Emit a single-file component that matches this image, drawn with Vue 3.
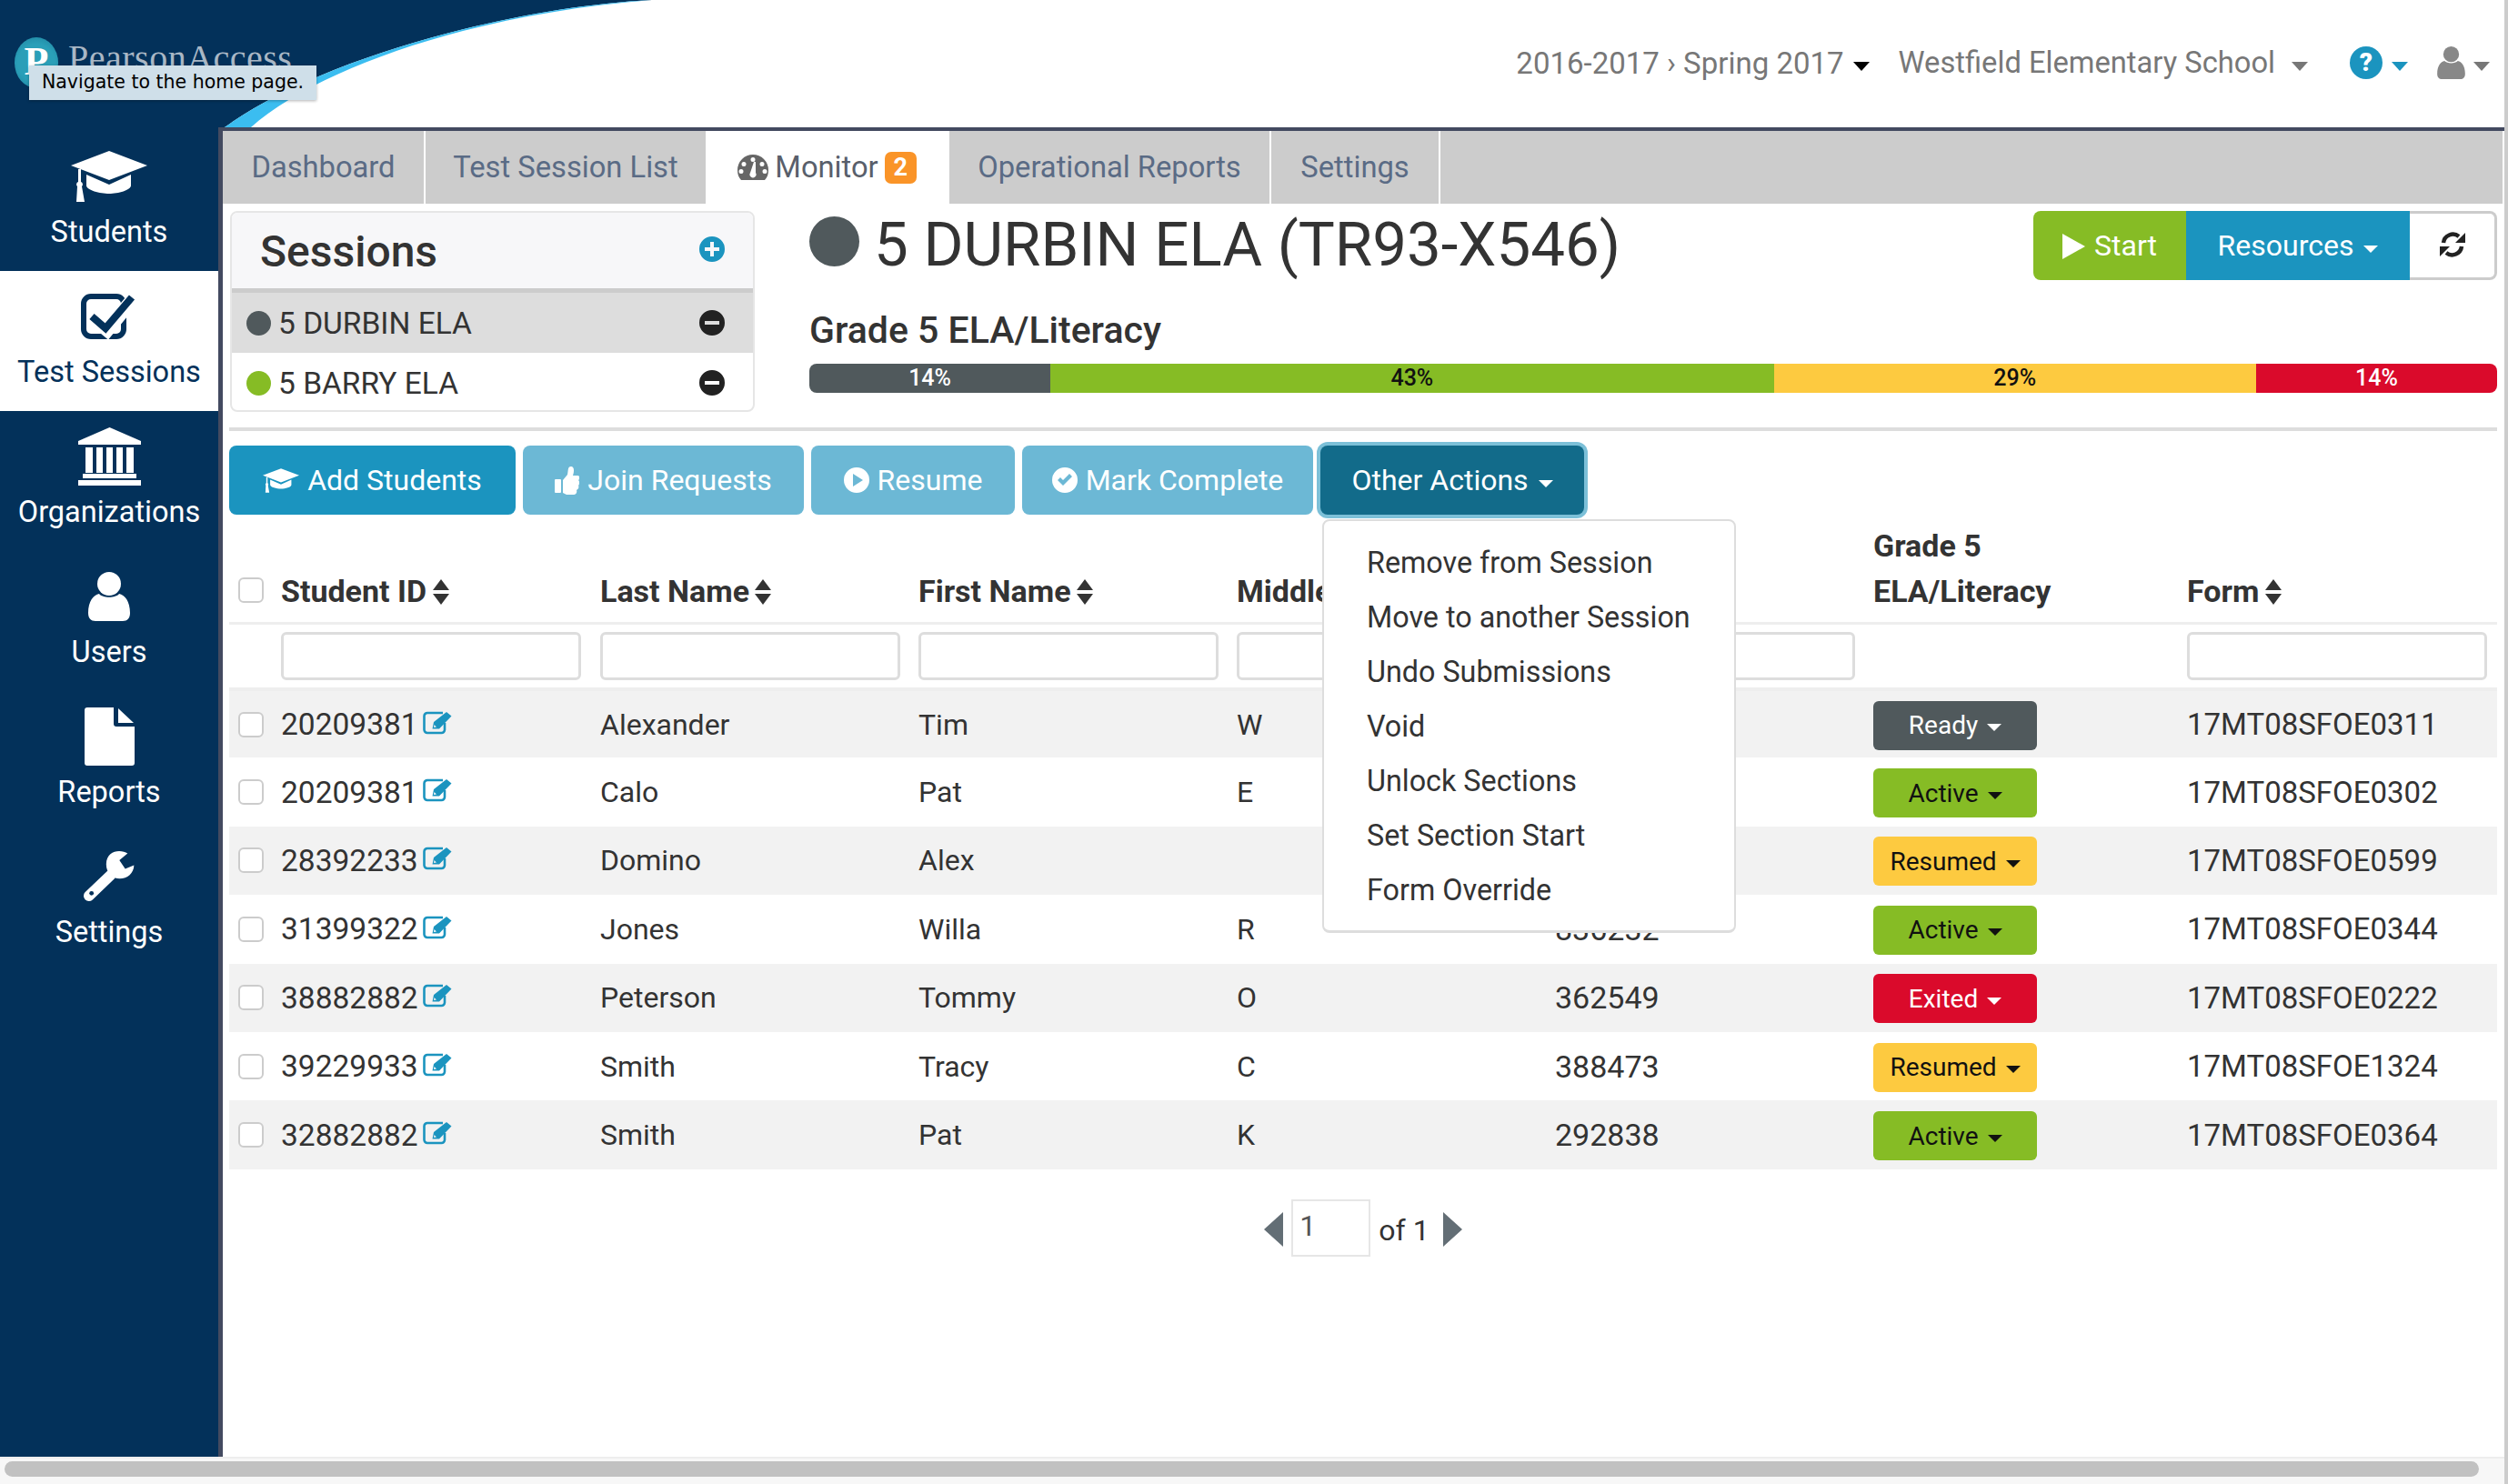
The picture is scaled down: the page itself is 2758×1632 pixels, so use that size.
<script setup>
import { ref } from 'vue'

const navItems = [
  { label: 'Students', icon: 'cap', w: 84, h: 56 },
  { label: 'Test Sessions', icon: 'check', w: 62, h: 50, active: true },
  { label: 'Organizations', icon: 'bank', w: 69, h: 64 },
  { label: 'Users', icon: 'user', w: 46, h: 54 },
  { label: 'Reports', icon: 'file', w: 55, h: 64 },
  { label: 'Settings', icon: 'wrench', w: 58, h: 60 },
]

const tabs = [
  { label: 'Dashboard', width: 223 },
  { label: 'Test Session List', width: 310 },
  { label: 'Monitor', width: 266, active: true, badge: 2 },
  { label: 'Operational Reports', width: 354 },
  { label: 'Settings', width: 186 },
]

const sessions = [
  { name: '5 DURBIN ELA', color: '#50595c', selected: true },
  { name: '5 BARRY ELA', color: '#86bc25' },
]

const progress = [
  { label: '14%', share: 100 / 7, color: '#50595c', text: '#fff' },
  { label: '43%', share: 300 / 7, color: '#86bc25', text: '#111' },
  { label: '29%', share: 200 / 7, color: '#fdca40', text: '#111' },
  { label: '14%', share: 100 / 7, color: '#da0a2b', text: '#fff' },
]

const actions = [
  { label: 'Add Students', icon: 'cap', w: 40, h: 27, primary: true, width: 315 },
  { label: 'Join Requests', icon: 'thumb', w: 27, h: 31, width: 309 },
  { label: 'Resume', icon: 'play', w: 28, h: 28, width: 224 },
  { label: 'Mark Complete', icon: 'ok', w: 28, h: 28, width: 320 },
]

const menuItems = [
  'Remove from Session',
  'Move to another Session',
  'Undo Submissions',
  'Void',
  'Unlock Sections',
  'Set Section Start',
  'Form Override',
]

const students = [
  { id: '20209381', last: 'Alexander', first: 'Tim', middle: 'W', code: '', status: 'Ready', form: '17MT08SFOE0311' },
  { id: '20209381', last: 'Calo', first: 'Pat', middle: 'E', code: '', status: 'Active', form: '17MT08SFOE0302' },
  { id: '28392233', last: 'Domino', first: 'Alex', middle: '', code: '', status: 'Resumed', form: '17MT08SFOE0599' },
  { id: '31399322', last: 'Jones', first: 'Willa', middle: 'R', code: '836232', status: 'Active', form: '17MT08SFOE0344' },
  { id: '38882882', last: 'Peterson', first: 'Tommy', middle: 'O', code: '362549', status: 'Exited', form: '17MT08SFOE0222' },
  { id: '39229933', last: 'Smith', first: 'Tracy', middle: 'C', code: '388473', status: 'Resumed', form: '17MT08SFOE1324' },
  { id: '32882882', last: 'Smith', first: 'Pat', middle: 'K', code: '292838', status: 'Active', form: '17MT08SFOE0364' },
]

const page = ref(1)
</script>

<template>
  <div class="page">
    <!-- icon sprite -->
    <svg class="sprite" aria-hidden="true">
      <symbol id="i-cap" viewBox="0 0 84 56">
        <path d="M42 0 84 16 42 32 0 16Z" />
        <path d="M17 26 42 37 66 26V38C66 43 52 47 42 47S17 43 17 38Z" />
        <path d="M8 20h3v14a3 3 0 0 1 1 5l3 17H6l1-17a3 3 0 0 1 1-5Z" />
      </symbol>
      <symbol id="i-check" viewBox="0 0 62 50">
        <rect x="3" y="3" width="44" height="44" rx="8" fill="none" stroke="currentColor" stroke-width="6" />
        <path d="M11 25 29 40 57 6" fill="none" stroke="#fff" stroke-width="15" />
        <path d="M12 25 27 38 56 4" fill="none" stroke="currentColor" stroke-width="8" />
      </symbol>
      <symbol id="i-bank" viewBox="0 0 69 64">
        <path d="M34.5 0 69 15V19H0V15Z" />
        <rect x="8" y="22" width="8" height="28" />
        <rect x="20" y="22" width="7" height="28" />
        <rect x="31" y="22" width="7" height="28" />
        <rect x="42" y="22" width="7" height="28" />
        <rect x="53" y="22" width="8" height="28" />
        <rect x="5" y="51" width="59" height="5" />
        <rect y="58" width="69" height="6" />
      </symbol>
      <symbol id="i-user" viewBox="0 0 46 54">
        <circle cx="23" cy="13" r="13" />
        <path d="M0 45C0 32 6 25 12 24 16 29 30 29 34 24 40 25 46 32 46 45 46 51 43 54 38 54H8C3 54 0 51 0 45Z" />
      </symbol>
      <symbol id="i-file" viewBox="0 0 55 64">
        <path d="M3 0H32V18A3 3 0 0 0 35 21H55V61A3 3 0 0 1 52 64H3A3 3 0 0 1 0 61V3A3 3 0 0 1 3 0Z" />
        <path d="M37 1 54 17H37Z" />
      </symbol>
      <symbol id="i-wrench" viewBox="0 0 60 60">
        <path d="M7 52 32 28" fill="none" stroke="currentColor" stroke-width="12" stroke-linecap="round" />
        <path d="M51 3.500C44-1 27-1 26.700 16 26.700 26 34 32.300 42 32.300 51 32.300 58 26 58.300 17L48.300 21.300 41.700 11.300Z" />
        <circle cx="10" cy="49" r="2.500" fill="#03315a" />
      </symbol>
      <symbol id="i-thumb" viewBox="0 0 27 31">
        <rect y="14" width="7" height="15" rx="1" />
        <path d="M9 15 14 9C15 5 14 0 18 0 21 0 22 4 20 10H25C28 10 28 14 26 15 28 17 27 20 26 21 27 23 26 25 24 26 25 29 23 31 21 31H13L9 29Z" />
      </symbol>
      <symbol id="i-play" viewBox="0 0 28 28">
        <path fill-rule="evenodd" d="M14 0a14 14 0 1 0 0 28a14 14 0 1 0 0-28ZM10 7 21 14 10 21Z" />
      </symbol>
      <symbol id="i-ok" viewBox="0 0 28 28">
        <path fill-rule="evenodd" d="M14 0a14 14 0 1 0 0 28a14 14 0 1 0 0-28ZM6 14 9 11 12 14 19 7 22 10 12 20Z" />
      </symbol>
      <symbol id="i-plus" viewBox="0 0 28 28">
        <path fill-rule="evenodd" d="M14 0a14 14 0 1 0 0 28a14 14 0 1 0 0-28ZM12 6H16V12H22V16H16V22H12V16H6V12H12Z" />
      </symbol>
      <symbol id="i-minus" viewBox="0 0 28 28">
        <path fill-rule="evenodd" d="M14 0a14 14 0 1 0 0 28a14 14 0 1 0 0-28ZM6 12H22V16H6Z" />
      </symbol>
      <symbol id="i-gauge" viewBox="0 0 34 28">
        <path fill-rule="evenodd" d="M17 0A17 17 0 0 1 34 17C34 21 33 25 30 28H4C1 25 0 21 0 17A17 17 0 0 1 17 0ZM17 3a2.500 2.500 0 1 0 0 5a2.500 2.500 0 1 0 0-5ZM7 8a2.500 2.500 0 1 0 0 5a2.500 2.500 0 1 0 0-5ZM27 8a2.500 2.500 0 1 0 0 5a2.500 2.500 0 1 0 0-5ZM4 16a2.500 2.500 0 1 0 0 5a2.500 2.500 0 1 0 0-5ZM30 16a2.500 2.500 0 1 0 0 5a2.500 2.500 0 1 0 0-5ZM18 8 14 20a3.500 3.500 0 1 0 6 0L20 8Z" />
      </symbol>
      <symbol id="i-refresh" viewBox="0 0 28 28">
        <path d="M4 12A10.500 10.500 0 0 1 21 5" fill="none" stroke="currentColor" stroke-width="4.500" />
        <path d="M28 1V12H17Z" />
        <path d="M24 16A10.500 10.500 0 0 1 7 23" fill="none" stroke="currentColor" stroke-width="4.500" />
        <path d="M0 27V16H11Z" />
      </symbol>
      <symbol id="i-edit" viewBox="0 0 32 26">
        <path d="M24 13V20.500A3.500 3.500 0 0 1 20.500 24H5A3.500 3.500 0 0 1 1.500 20.500V5.500A3.500 3.500 0 0 1 5 2H22" fill="none" stroke="currentColor" stroke-width="2.600" />
        <path fill-rule="evenodd" d="M10.500 19.500 12 12 26 1 31.500 5.500 18 19.500ZM12.500 15 12 18 15 17.500Z" />
      </symbol>
      <symbol id="i-sort" viewBox="0 0 18 28">
        <path d="M9 0 18 12H0Z" />
        <path d="M0 16H18L9 28Z" />
      </symbol>
    </svg>

    <header class="top">
      <svg class="swoosh" viewBox="0 0 2758 144" preserveAspectRatio="none">
        <path d="M0 0H717C560 8 350 65 247 140V144H0Z" fill="#03315a" />
        <path d="M717 0C560 8 350 65 247 140H276C350 75 520 15 717 0Z" fill="#3bbdf0" />
        <rect x="240" y="140" width="2518" height="4" fill="#434a60" />
      </svg>

      <div class="logo">
        <span class="logo-mark">P</span>
        <span class="logo-text">PearsonAccess</span>
      </div>
      <div class="tooltip">Navigate to the home page.</div>

      <div class="tools">
        <span class="term">2016-2017 › Spring 2017</span>
        <i class="caret caret-top dark"></i>
        <span class="school">Westfield Elementary School</span>
        <i class="caret caret-top"></i>
        <span class="help">?</span>
        <i class="caret caret-top teal"></i>
        <svg class="account" width="31" height="36"><use href="#i-user" /></svg>
        <i class="caret caret-top"></i>
      </div>
    </header>

    <nav class="side">
      <a v-for="item in navItems" :key="item.label" class="side-item" :class="{ current: item.active }">
        <span class="side-icon">
          <svg :width="item.w" :height="item.h"><use :href="`#i-${item.icon}`" /></svg>
        </span>
        <span class="side-label">{{ item.label }}</span>
      </a>
    </nav>

    <main class="main">
      <div class="tabs">
        <a v-for="tab in tabs" :key="tab.label" class="tab" :class="{ current: tab.active }" :style="{ width: tab.width + 'px' }">
          <svg v-if="tab.active" width="34" height="28"><use href="#i-gauge" /></svg>
          {{ tab.label }}
          <span v-if="tab.badge" class="badge">{{ tab.badge }}</span>
        </a>
      </div>

      <div class="content">
        <div class="overview">
          <section class="sessions">
            <div class="sessions-head">
              <h2>Sessions</h2>
              <svg class="teal-icon" width="28" height="28"><use href="#i-plus" /></svg>
            </div>
            <div v-for="s in sessions" :key="s.name" class="session" :class="{ selected: s.selected }">
              <i class="dot" :style="{ background: s.color }"></i>
              <span class="session-name">{{ s.name }}</span>
              <svg width="28" height="28"><use href="#i-minus" /></svg>
            </div>
          </section>

          <section class="detail">
            <div class="detail-head">
              <i class="title-dot"></i>
              <h1>5 DURBIN ELA (TR93-X546)</h1>
              <div class="head-buttons">
                <button class="head-btn start"><i class="play"></i>Start</button>
                <button class="head-btn resources">Resources <i class="caret caret-btn"></i></button>
                <button class="head-btn refresh"><svg width="28" height="28"><use href="#i-refresh" /></svg></button>
              </div>
            </div>
            <h3>Grade 5 ELA/Literacy</h3>
            <div class="progress">
              <div
                v-for="(p, i) in progress"
                :key="i"
                class="progress-part"
                :style="{ width: p.share + '%', background: p.color, color: p.text }"
              >{{ p.label }}</div>
            </div>
          </section>
        </div>

        <div class="divider"></div>

        <div class="actions">
          <button
            v-for="a in actions"
            :key="a.label"
            class="action"
            :class="{ primary: a.primary }"
            :style="{ width: a.width + 'px' }"
          >
            <svg :width="a.w" :height="a.h"><use :href="`#i-${a.icon}`" /></svg>
            {{ a.label }}
          </button>
          <button class="action other">Other Actions <i class="caret caret-btn"></i></button>

          <ul class="menu">
            <li v-for="m in menuItems" :key="m">{{ m }}</li>
          </ul>
        </div>

        <table class="grid">
          <colgroup>
            <col style="width: 57px" />
            <col style="width: 351px" />
            <col style="width: 350px" />
            <col style="width: 350px" />
            <col style="width: 350px" />
            <col style="width: 350px" />
            <col style="width: 345px" />
            <col style="width: 341px" />
          </colgroup>
          <thead>
            <tr class="head-row">
              <th><input type="checkbox" class="box" /></th>
              <th>Student ID <svg class="sort" width="18" height="28"><use href="#i-sort" /></svg></th>
              <th>Last Name <svg class="sort" width="18" height="28"><use href="#i-sort" /></svg></th>
              <th>First Name <svg class="sort" width="18" height="28"><use href="#i-sort" /></svg></th>
              <th>Middle Name</th>
              <th></th>
              <th>Grade 5<br />ELA/Literacy</th>
              <th>Form <svg class="sort" width="18" height="28"><use href="#i-sort" /></svg></th>
            </tr>
            <tr class="filter-row">
              <td></td>
              <td><input class="filter" /></td>
              <td><input class="filter" /></td>
              <td><input class="filter" /></td>
              <td><input class="filter" /></td>
              <td><input class="filter" /></td>
              <td></td>
              <td><input class="filter" /></td>
            </tr>
          </thead>
          <tbody>
            <tr v-for="(st, i) in students" :key="i">
              <td><input type="checkbox" class="box" /></td>
              <td>
                <span class="id">{{ st.id }}<svg class="edit" width="32" height="26"><use href="#i-edit" /></svg></span>
              </td>
              <td>{{ st.last }}</td>
              <td>{{ st.first }}</td>
              <td>{{ st.middle }}</td>
              <td class="code">{{ st.code }}</td>
              <td>
                <button class="status" :class="st.status.toLowerCase()">{{ st.status }} <i class="caret caret-btn"></i></button>
              </td>
              <td class="form">{{ st.form }}</td>
            </tr>
          </tbody>
        </table>

        <div class="pager">
          <i class="arrow left"></i>
          <input v-model="page" class="pager-input" />
          <span>of 1</span>
          <i class="arrow right"></i>
        </div>
      </div>
    </main>

    <div class="hscroll"><div class="thumb"></div></div>
  </div>
</template>

<style scoped>
* {
  box-sizing: border-box;
}

.page {
  width: 2758px;
  height: 1632px;
  position: relative;
  overflow: hidden;
  display: grid;
  grid-template-columns: 240px 1fr;
  grid-template-rows: 144px 1fr 30px;
  background: #fff;
  color: #333;
  font-family: Roboto, "Liberation Sans", sans-serif;
  font-size: 32px;
  border-right: 4px solid #ccc;
}

.sprite {
  position: absolute;
  width: 0;
  height: 0;
}

/* header */
.top {
  grid-column: 1 / 3;
  position: relative;
  display: flex;
  justify-content: flex-end;
}

.swoosh {
  position: absolute;
  left: 0;
  top: 0;
  width: 2758px;
  height: 144px;
}

.logo {
  position: absolute;
  left: 16px;
  top: 41px;
  display: flex;
  align-items: flex-start;
  gap: 11px;
}

.logo-mark {
  width: 48px;
  height: 56px;
  border-radius: 50%;
  background: radial-gradient(circle, #2a9fb8 55%, #1c7f9c 100%);
  color: #fff;
  text-align: center;
  font: 700 44px/54px "Liberation Serif", serif;
}

.logo-text {
  color: #a9b7c5;
  font: 40px/46px "Liberation Serif", serif;
  letter-spacing: 0.5px;
}

.tooltip {
  position: absolute;
  left: 32px;
  top: 72px;
  width: 316px;
  height: 38px;
  background: #cfdfe9;
  color: #000;
  font: 20.500px/37px "DejaVu Sans", sans-serif;
  text-align: center;
  box-shadow: 0 1px 3px rgba(0, 0, 0, 0.3);
}

.tools {
  position: relative;
  height: 140px;
  display: flex;
  align-items: center;
  padding-right: 16px;
  color: #777;
  padding-bottom: 2px;
}

.term {
  font-size: 33px;
}

.school {
  font-size: 32.700px;
  margin-left: 32px;
  margin-right: 18px;
}

.help {
  margin-left: 46px;
  margin-right: 10px;
  width: 36px;
  height: 36px;
  border-radius: 50%;
  background: #1b94bf;
  color: #fff;
  font-size: 28px;
  font-weight: 900;
  line-height: 36px;
  text-align: center;
}

.account {
  margin-left: 32px;
  margin-right: 9px;
  fill: #888;
}

.caret {
  display: inline-block;
  width: 0;
  height: 0;
  border-left: 9px solid transparent;
  border-right: 9px solid transparent;
  border-top: 10px solid #777;
}

.caret-top {
  margin-top: 8px;
}

.caret-top.dark {
  margin-left: 10px;
  border-top-color: #000;
}

.caret-top.teal {
  border-top-color: #1b94bf;
}

.caret-btn {
  border-left-width: 8px;
  border-right-width: 8px;
  border-top: 8px solid currentColor;
  vertical-align: 3px;
  margin-left: 3px;
}

/* sidebar */
.side {
  background: #03315a;
  color: #fff;
}

.side-item {
  height: 154px;
  display: flex;
  flex-direction: column;
  align-items: center;
}

.side-item.current {
  background: #fff;
  color: #03315a;
}

.side-icon {
  height: 84px;
  margin-top: 8px;
  margin-bottom: -1px;
  display: flex;
  align-items: center;
}

.side-icon svg {
  fill: currentColor;
}

.side-label {
  font-size: 32.500px;
  line-height: 40px;
}

/* main */
.main {
  border-left: 5px solid #434a60;
  min-width: 0;
  padding-right: 2px;
  display: flex;
  flex-direction: column;
}

.tabs {
  height: 80px;
  background: #ccc;
  display: flex;
  flex: none;
  font-size: 32.700px;
}

.tab {
  display: flex;
  align-items: center;
  justify-content: center;
  gap: 7px;
  color: #5a6b85;
  border-right: 2px solid #fff;
}

.tab.current {
  background: #fff;
  color: #595f6b;
  border-right: 0;
  padding-right: 3px;
}

.tab svg {
  fill: #666;
}

.badge {
  width: 35px;
  height: 35px;
  border-radius: 7px;
  background: #fa9428;
  color: #fff;
  font-size: 27px;
  font-weight: 700;
  line-height: 35px;
  text-align: center;
}

.content {
  padding: 8px 6px 0 7px;
  position: relative;
}

.overview {
  display: flex;
  height: 238px;
}

.sessions {
  width: 577px;
  height: 221px;
  margin-left: 1px;
  flex: none;
  border: 2px solid #e6e6e6;
  border-radius: 8px;
  overflow: hidden;
}

.sessions-head {
  height: 88px;
  background: #f7f7f9;
  border-bottom: 5px solid #ccc;
  display: flex;
  align-items: center;
  justify-content: space-between;
  padding: 0 31px 0 31px;
}

.sessions-head h2 {
  margin: 2px 0 0;
  font-size: 48px;
  font-weight: 500;
  color: #333;
}

.teal-icon {
  fill: #1b94bf;
  margin-bottom: 4px;
}

.session {
  height: 66px;
  display: flex;
  align-items: center;
  padding: 0 31px 0 16px;
  color: #333;
}

.session.selected {
  background: #ddd;
}

.session-name {
  flex: 1;
  margin-left: 8px;
  font-size: 33.500px;
}

.dot {
  width: 27px;
  height: 27px;
  border-radius: 50%;
}

.session svg {
  fill: #222;
}

.detail {
  margin-left: 60px;
  flex: 1;
  min-width: 0;
}

.detail-head {
  height: 76px;
  display: flex;
  align-items: flex-start;
}

.title-dot {
  width: 55px;
  height: 55px;
  margin-top: 6px;
  border-radius: 50%;
  background: #50595c;
  flex: none;
}

h1 {
  margin: 3px 0 0 16px;
  font-size: 67.200px;
  line-height: 68px;
  font-weight: 400;
  color: #333;
  flex: 1;
}

.head-buttons {
  display: flex;
  height: 76px;
}

.head-btn {
  border: 0;
  font: inherit;
  color: #fff;
  height: 76px;
  padding: 0;
}

.start {
  width: 168px;
  background: #86bc25;
  border-radius: 8px 0 0 8px;
}

.play {
  display: inline-block;
  width: 0;
  height: 0;
  border-left: 25px solid #fff;
  border-top: 14px solid transparent;
  border-bottom: 14px solid transparent;
  margin-right: 10px;
  vertical-align: -4px;
}

.resources {
  width: 246px;
  background: #1b94bf;
}

.refresh {
  width: 96px;
  background: #fff;
  border: 3px solid #ccc;
  border-left: 0;
  border-radius: 0 8px 8px 0;
  color: #222;
}

.refresh svg {
  fill: #222;
  display: block;
  margin: 0 auto 2px;
}

h3 {
  margin: 31px 0 0;
  font-size: 41px;
  line-height: 48px;
  font-weight: 500;
  color: #333;
}

.progress {
  display: flex;
  height: 32px;
  margin-top: 13px;
  border-radius: 8px;
  overflow: hidden;
}

.progress-part {
  font-size: 25px;
  font-weight: 500;
  line-height: 32px;
  text-align: center;
}

.divider {
  height: 4px;
  background: #ddd;
}

.actions {
  display: flex;
  gap: 8px;
  margin-top: 16px;
  position: relative;
  height: 76px;
}

.action {
  height: 76px;
  border: 0;
  border-radius: 8px;
  padding: 0;
  font: inherit;
  color: #fff;
  background: #6cb8d5;
  display: flex;
  align-items: center;
  justify-content: center;
  gap: 9px;
  white-space: nowrap;
  flex: none;
}

.action svg {
  fill: #fff;
  flex: none;
}

.action.primary {
  background: #1b94bf;
}

.other {
  background: #126b8a;
  box-shadow: 0 0 0 4px #7cc0d8;
  width: 290px;
  display: block;
}

.menu {
  position: absolute;
  left: 1202px;
  top: 81px;
  width: 455px;
  height: 455px;
  margin: 0;
  padding: 16px 0 0 47px;
  list-style: none;
  background: #fff;
  border: 2px solid #ddd;
  border-bottom-width: 3px;
  border-radius: 8px;
  z-index: 5;
  font-size: 32.300px;
}

.menu li {
  height: 60px;
  line-height: 60px;
}

.grid {
  width: 2494px;
  margin-top: 3px;
  table-layout: fixed;
  border-collapse: collapse;
}

.head-row th {
  height: 116px;
  padding: 0 0 9px;
  text-align: left;
  vertical-align: bottom;
  font-size: 34px;
  font-weight: 700;
  line-height: 50px;
  color: #333;
  border-bottom: 3px solid #eee;
  white-space: nowrap;
}

.sort {
  vertical-align: -3px;
  margin-left: -2px;
  fill: #333;
}

.filter-row td {
  height: 73px;
  padding: 0;
}

.filter {
  display: block;
  width: 330px;
  height: 53px;
  border: 3px solid #ddd;
  border-radius: 6px;
  background: #fff;
}

tbody tr td {
  height: 75.400px;
  padding: 0;
}

tbody tr:nth-child(odd) td {
  background: #f2f2f2;
}

tbody tr:first-child td {
  border-top: 4px solid #eee;
}

.box {
  appearance: none;
  display: block;
  width: 28px;
  height: 28px;
  margin: 0 0 0 10px;
  background: #fff;
  border: 2px solid #ccc;
  border-radius: 6px;
}

.head-row .box {
  margin-bottom: 12px;
}

.id {
  display: inline-flex;
  align-items: center;
  gap: 5px;
  font-size: 33.500px;
}

.edit {
  fill: #1b94bf;
  color: #1b94bf;
  margin-top: -4px;
}

.code {
  font-size: 34px;
}

.form {
  font-size: 33px;
}

.status {
  display: block;
  width: 180px;
  height: 54px;
  border: 0;
  border-radius: 6px;
  font: 28px Roboto, sans-serif;
  padding: 0;
  margin-top: 2px;
}

.ready {
  background: #50595c;
  color: #fff;
}

.active {
  background: #86bc25;
  color: #111;
}

.resumed {
  background: #fdca40;
  color: #111;
}

.exited {
  background: #da0a2b;
  color: #fff;
}

.pager {
  display: flex;
  align-items: center;
  justify-content: center;
  margin-top: 33px;
  gap: 9px;
}

.pager-input {
  width: 87px;
  height: 63px;
  border: 2px solid #e6e6e6;
  padding: 0 0 4px 7px;
  font: inherit;
  color: #555;
  margin-right: 0;
}

.arrow {
  width: 0;
  height: 0;
  border-top: 19px solid transparent;
  border-bottom: 19px solid transparent;
  margin-top: 4px;
}

.arrow.left {
  border-right: 21px solid #636e75;
}

.arrow.right {
  border-left: 21px solid #636e75;
  margin-left: 6px;
}

.pager span {
  margin-top: 6px;
}

/* page scrollbar */
.hscroll {
  grid-column: 1 / 3;
  background: #f7f7f7;
  border-top: 2px solid #eee;
  padding: 3px 28px 0 5px;
}

.thumb {
  height: 17px;
  background: #c1c1c1;
  border-radius: 9px;
}
</style>

<style>
html,
body {
  margin: 0;
  overflow: hidden;
}
</style>
